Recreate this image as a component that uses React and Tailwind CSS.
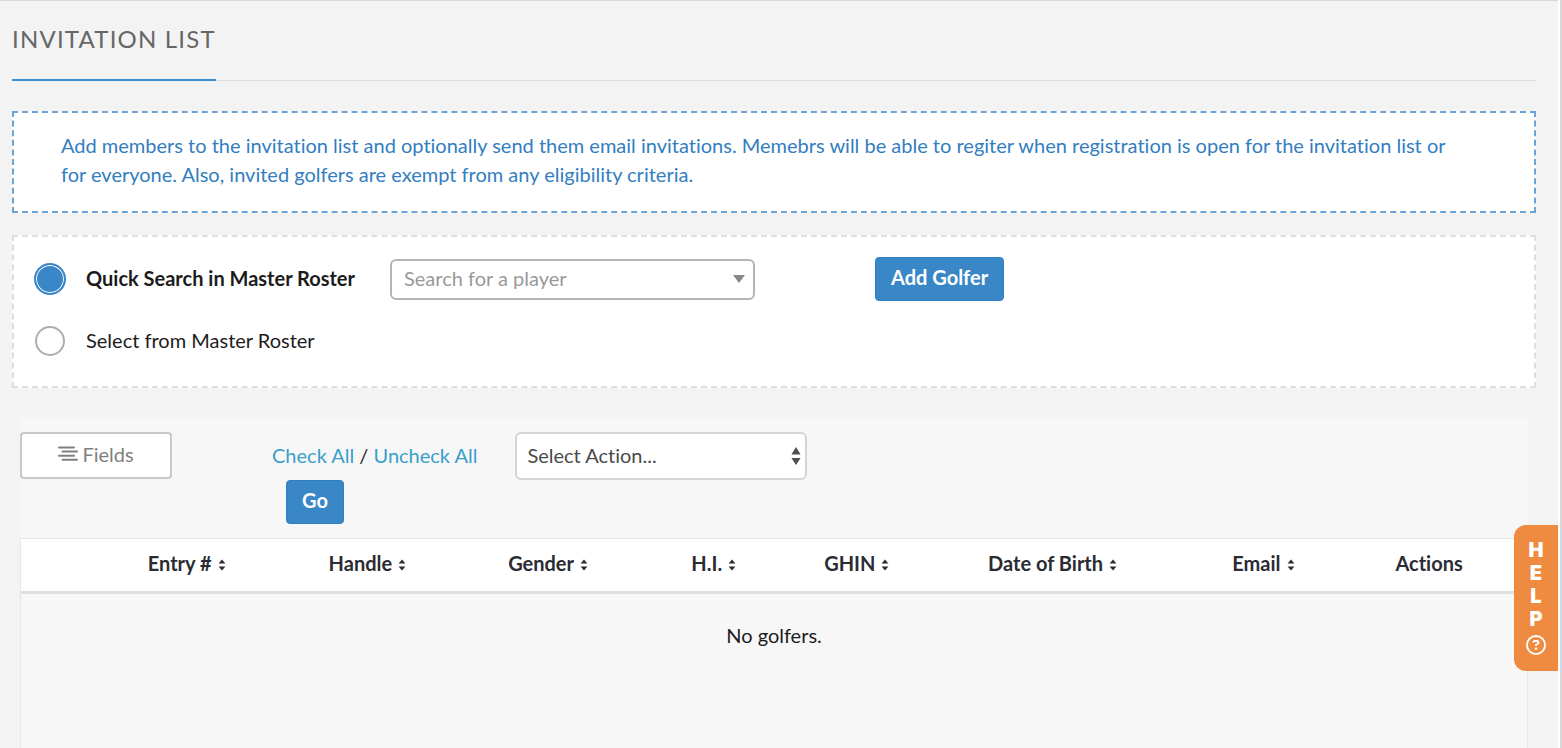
import React from 'react';
import { FaRegCircleQuestion } from 'react-icons/fa6';

const columns = [
  { label: 'Entry #', sortable: true, width: 'w-[12%]' },
  { label: 'Handle', sortable: true, width: 'w-[12%]' },
  { label: 'Gender', sortable: true, width: 'w-[12%]' },
  { label: 'H.I.', sortable: true, width: 'w-[10%]' },
  { label: 'GHIN', sortable: true, width: 'w-[9%]' },
  { label: 'Date of Birth', sortable: true, width: 'w-[17%]' },
  { label: 'Email', sortable: true, width: 'w-[11%]' },
  { label: 'Actions', sortable: false, width: 'w-[11%]' },
];

const SortIcon = () => (
  <svg className="ml-1.5 inline-block h-3 w-2 align-baseline" viewBox="0 0 8 12" fill="currentColor" aria-hidden="true">
    <path d="M4 0.6 7.4 4.4H.6z" />
    <path d="M4 11.4 7.4 7.6H.6z" />
  </svg>
);

const FieldsIcon = () => (
  <svg className="h-4 w-5" viewBox="0 0 20 16" stroke="currentColor" strokeWidth="2" strokeLinecap="round" aria-hidden="true">
    <path d="M1 1.5h15M4.5 5.6h14.5M1 9.8h15M4.5 13.8h14.5" />
  </svg>
);

const RadioRow = ({ id, label, checked, onChange, children }) => (
  <div className="flex h-11 items-center">
    <span className="flex w-8 justify-center">
      <input
        type="radio"
        id={id}
        name="source"
        checked={checked}
        onChange={onChange}
        className="size-[30px] appearance-none rounded-full border-2 border-[#adadad] bg-white checked:size-8 checked:border-[#3a87c8] checked:bg-[#3a87c8] checked:shadow-[inset_0_0_0_1px_white]"
      />
    </span>
    <label htmlFor={id} className={`ml-5 w-[276px] pb-0.5 ${checked ? 'font-bold' : 'font-normal'}`}>
      {label}
    </label>
    {children}
  </div>
);

const BlueButton = ({ children, className }) => (
  <button type="button" className={`h-11 rounded-sm border border-[#2f7fc2] bg-[#3a87c8] px-[15px] pb-1 font-bold text-white ${className}`}>
    {children}
  </button>
);

const App = () => {
  const [source, setSource] = React.useState('search');

  return (
    <div className="border-r-2 border-[#d8d8d8] bg-white pr-0.5 font-['Lato',sans-serif] text-xl text-[#1c1c1c] [font-variant-ligatures:none]">
      <div className="flex h-screen flex-col overflow-hidden border-t border-[#d8d8d8] bg-[#f3f3f3] pr-[22px] pl-3">
        <header className="flex border-b border-[#dcdcdc]">
          <h1 className="-mb-px border-b-2 border-[#3a8fd6] pt-5 pb-[22px] text-2xl leading-9 tracking-wider text-[#666666]">
            INVITATION LIST
          </h1>
        </header>

        <div className="mt-[30px] border-2 border-dashed border-[#6ba5d8] bg-white pt-[18px] pr-16 pb-[22px] pl-[47px] leading-[29px] text-[#337ebf]">
          Add members to the invitation list and optionally send them email invitations. Memebrs will be able to regiter when registration is open for the invitation list or for everyone. Also, invited golfers are exempt from any eligibility criteria.
        </div>

        <div className="mt-[22px] space-y-[18px] border-2 border-dashed border-[#dedede] bg-white px-5 pt-5 pb-[23px]">
          <RadioRow id="quick" label="Quick Search in Master Roster" checked={source === 'search'} onChange={() => setSource('search')}>
            <div className="relative ml-7">
              <select aria-label="Search for a player" className="h-[41px] w-[365px] appearance-none rounded-md border-2 border-[#b5b5b5] bg-white px-3 pb-0.5 text-[#999999]">
                <option>Search for a player</option>
              </select>
              <svg className="pointer-events-none absolute top-4 right-2.5 h-2 w-3" viewBox="0 0 12 8" fill="#888888" aria-hidden="true">
                <path d="M0 0h12L6 8z" />
              </svg>
            </div>
            <BlueButton className="ml-30">Add Golfer</BlueButton>
          </RadioRow>
          <RadioRow id="select" label="Select from Master Roster" checked={source === 'select'} onChange={() => setSource('select')} />
        </div>

        <section className="mx-2 mt-[29px] flex grow flex-col bg-[#f7f7f7]">
          <div className="flex items-start pt-[15px] pb-3.5">
            <button type="button" className="flex h-[47px] w-[152px] items-center justify-center gap-1 rounded border-2 border-[#c8c8c8] bg-white pb-1 text-[#808080]">
              <FieldsIcon />
              Fields
            </button>
            <div className="ml-[100px]">
              <div className="flex h-12 items-center">
                <span className="pb-0.5">
                  <a href="#check" className="text-[#3a9fcb]">Check All</a> / <a href="#uncheck" className="text-[#3a9fcb]">Uncheck All</a>
                </span>
                <div className="relative ml-[38px]">
                  <select aria-label="Select Action" className="h-12 w-[292px] appearance-none rounded-md border-2 border-[#d4d4d4] bg-white px-2.5 pb-0.5 text-[#4a4a4a]">
                    <option>Select Action...</option>
                  </select>
                  <svg className="pointer-events-none absolute top-3.5 right-1.5 h-5 w-2.5" viewBox="0 0 10 20" fill="#505050" aria-hidden="true">
                    <path d="M5 1 9.6 8.6H.4zM5 19 9.6 12H.4z" />
                  </svg>
                </div>
              </div>
              <BlueButton className="ml-3.5">Go</BlueButton>
            </div>
          </div>

          <div className="grow border border-b-0 border-[#e6e6e6]">
            <table className="w-full table-fixed">
              <thead className="border-b-3 border-[#dfdfdf] bg-white text-[#2b2b33]">
                <tr>
                  <th className="w-[5%]" aria-label="Select"></th>
                  {columns.map((col) => (
                    <th key={col.label} className={`h-[53px] pb-1 font-bold ${col.width}`}>
                      {col.label}
                      {col.sortable && <SortIcon />}
                    </th>
                  ))}
                  <td></td>
                </tr>
              </thead>
              <tbody>
                <tr>
                  <td colSpan={10} className="h-[88px] pb-1 text-center">No golfers.</td>
                </tr>
              </tbody>
            </table>
          </div>
        </section>
      </div>

      <button type="button" className="fixed top-[525px] right-1 flex w-11 flex-col items-center rounded-l-xl bg-[#ef8b40] pt-3.5 pb-4 font-['Inter',sans-serif] text-xl leading-[23px] font-black text-white">
        <span>H</span>
        <span>E</span>
        <span>L</span>
        <span>P</span>
        <FaRegCircleQuestion className="mt-1 size-5" />
      </button>
    </div>
  );
};

export default App;
